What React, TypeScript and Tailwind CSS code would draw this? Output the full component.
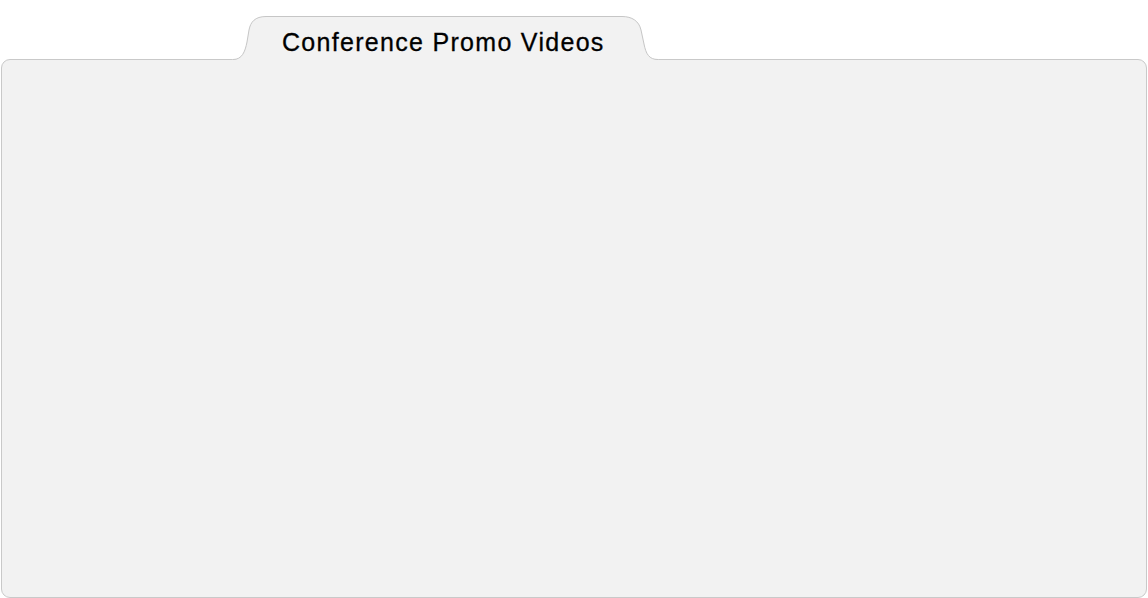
export default function App() {
  return (
    <div className="w-[1148px] h-[598px] bg-white flex flex-col pt-[16px]" style={{ fontFamily: '"Liberation Sans", Arial, sans-serif' }}>
      <div className="relative z-10 ml-[230px] w-[450px] h-[44px] flex items-start">
        <svg className="absolute inset-0" width="450" height="44" viewBox="0 0 450 44">
          <path
            d="M 0 45 L 3 43.5 C 12 43.5, 15 36, 17 26 L 19 14 C 20.5 6, 25 0.5, 36 0.5 L 392 0.5 C 402 0.5, 409 5, 411 14 L 414 28 C 416 38, 419 43.5, 428 43.5 L 430 45 Z"
            fill="#f2f2f2"
          />
          <path
            d="M 3 43.5 C 12 43.5, 15 36, 17 26 L 19 14 C 20.5 6, 25 0.5, 36 0.5 L 392 0.5 C 402 0.5, 409 5, 411 14 L 414 28 C 416 38, 419 43.5, 428 43.5"
            fill="none"
            stroke="#c6c6c6"
            strokeWidth="1"
          />
        </svg>
        <span className="relative ml-[52px] mt-[9px] text-[25px] leading-[34px] tracking-[1.3px] text-black [-webkit-text-stroke:0.3px_black]">
          Conference Promo Videos
        </span>
      </div>
      <div className="-mt-[1px] ml-[1px] w-[1146px] h-[539px] border border-[#c9c9c9] rounded-[9px] bg-[#f2f2f2]" />
    </div>
  );
}
